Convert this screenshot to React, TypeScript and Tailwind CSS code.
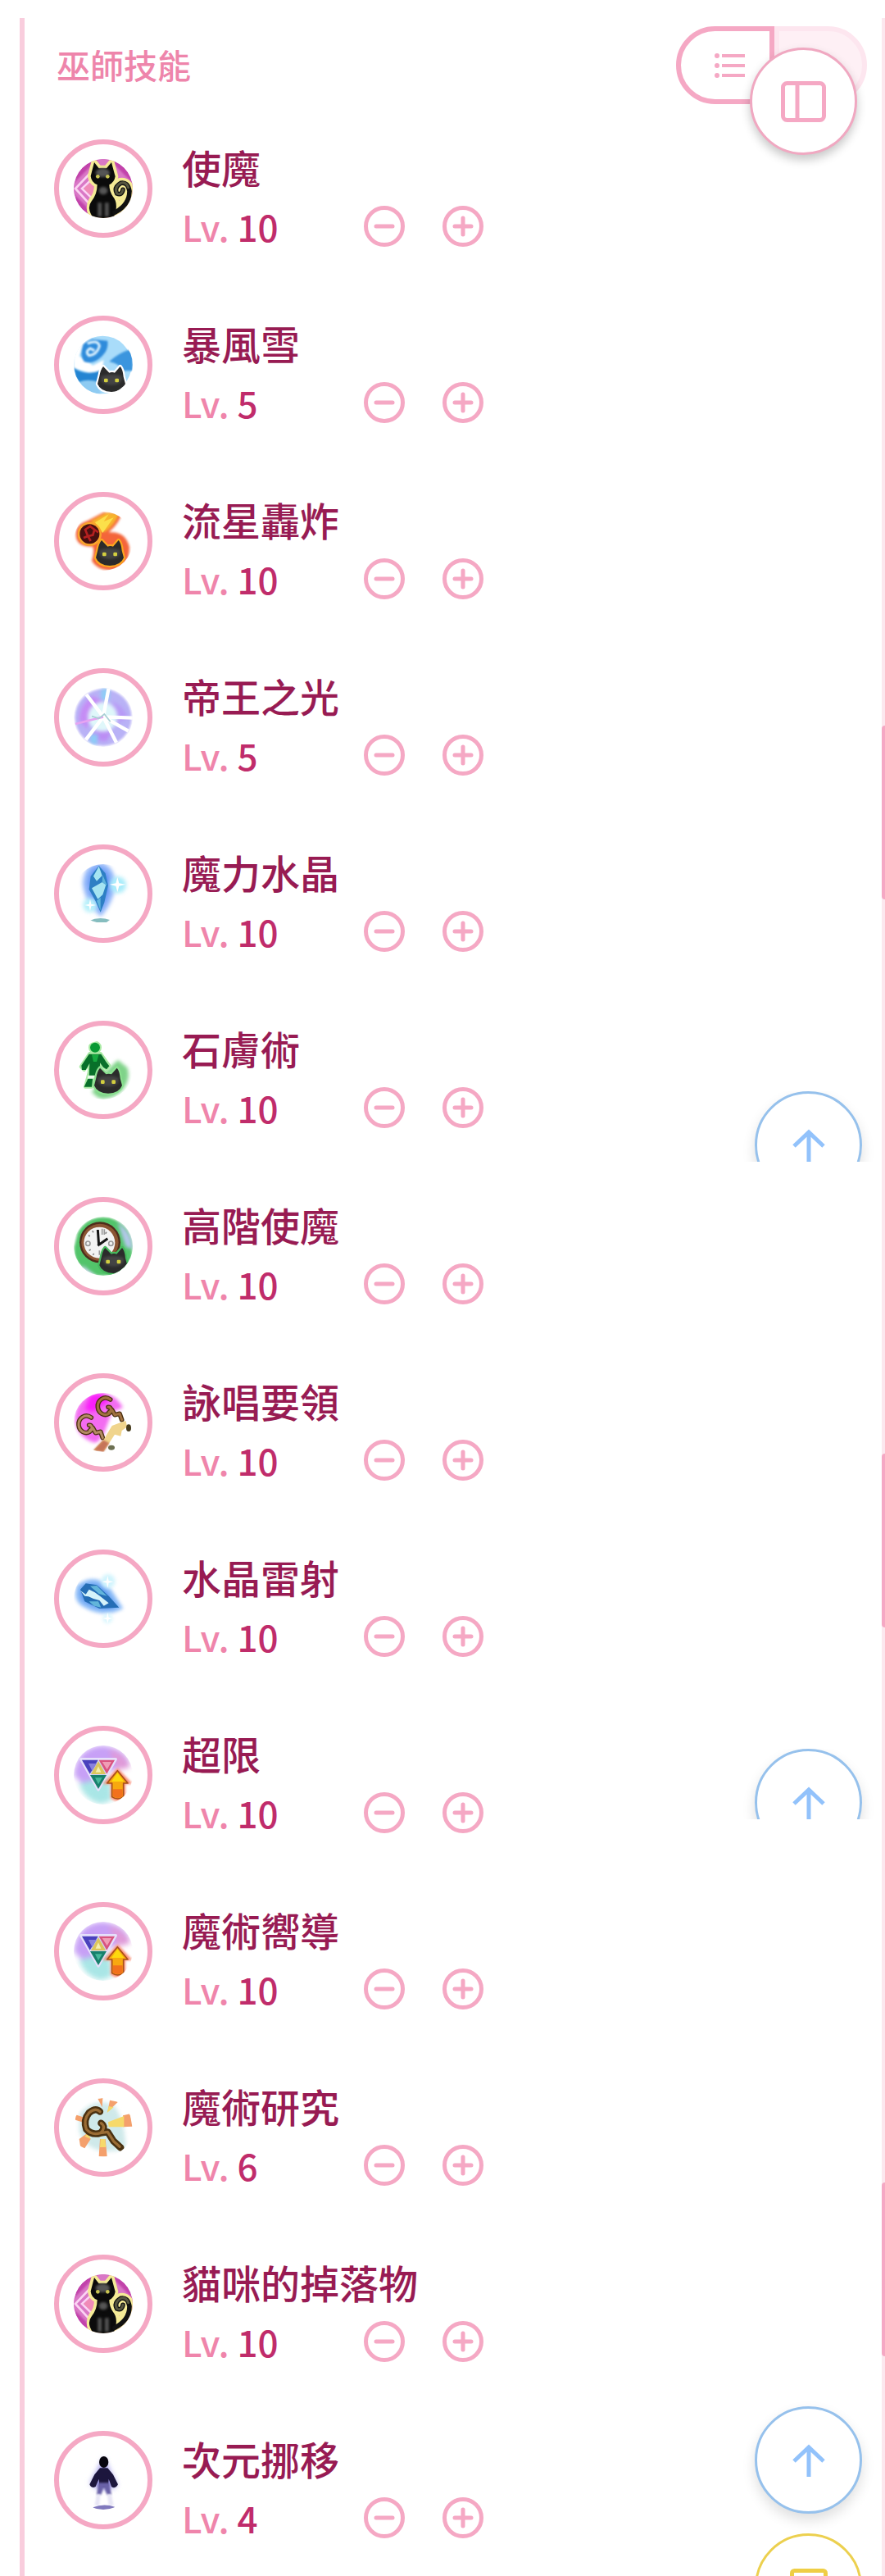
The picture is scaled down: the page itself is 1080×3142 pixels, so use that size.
import { useState } from 'react';
import type { ReactNode } from 'react';
import clsx from 'clsx';

type IconName =
  | 'familiar'
  | 'blizzard'
  | 'meteor'
  | 'light'
  | 'crystal'
  | 'stone'
  | 'clock'
  | 'chant'
  | 'laser'
  | 'prism'
  | 'research'
  | 'shift';

interface Skill {
  id: number;
  name: string;
  level: number;
  icon: IconName;
}

const SKILLS: Skill[] = [
  { id: 1, name: '使魔', level: 10, icon: 'familiar' },
  { id: 2, name: '暴風雪', level: 5, icon: 'blizzard' },
  { id: 3, name: '流星轟炸', level: 10, icon: 'meteor' },
  { id: 4, name: '帝王之光', level: 5, icon: 'light' },
  { id: 5, name: '魔力水晶', level: 10, icon: 'crystal' },
  { id: 6, name: '石膚術', level: 10, icon: 'stone' },
  { id: 7, name: '高階使魔', level: 10, icon: 'clock' },
  { id: 8, name: '詠唱要領', level: 10, icon: 'chant' },
  { id: 9, name: '水晶雷射', level: 10, icon: 'laser' },
  { id: 10, name: '超限', level: 10, icon: 'prism' },
  { id: 11, name: '魔術嚮導', level: 10, icon: 'prism' },
  { id: 12, name: '魔術研究', level: 6, icon: 'research' },
  { id: 13, name: '貓咪的掉落物', level: 10, icon: 'familiar' },
  { id: 14, name: '次元挪移', level: 4, icon: 'shift' },
];

const HEAD =
  'M108 114L130 137Q140 133 150 137L170 114Q180 125 182 152L189 178Q178 206 138 207Q98 206 87 178L94 150Q98 125 108 114Z';

const CatHead = ({ x = 0, y = 0, glow }: { x?: number; y?: number; glow: string }) => (
  <g transform={`translate(${x} ${y})`}>
    <path d={HEAD} fill={glow} stroke={glow} strokeWidth="13" strokeLinejoin="round" className="blur-[2px]" />
    <path d={HEAD} fill="#2b2b2b" />
    <path d="M100 150Q138 136 176 150Q182 180 138 182Q96 180 100 150Z" fill="#444" className="blur-[5px]" />
    <rect x="111" y="158" width="14" height="14" rx="4" fill="#d3cf3f" />
    <rect x="151" y="158" width="14" height="14" rx="4" fill="#d3cf3f" />
  </g>
);

const Staff = ({ x, y, color }: { x: number; y: number; color: string }) => (
  <g transform={`translate(${x} ${y})`} fill="none" strokeLinecap="round" strokeLinejoin="round">
    <path d="M52 10C30 -6 4 12 6 38C8 60 30 72 46 62C58 54 56 36 44 38M46 58L58 48L68 66L86 62L94 84" stroke="#4b3010" strokeWidth="17" />
    <path d="M52 10C30 -6 4 12 6 38C8 60 30 72 46 62C58 54 56 36 44 38M46 58L58 48L68 66L86 62L94 84" stroke={color} strokeWidth="9" />
  </g>
);

const ICONS: Record<IconName, ReactNode> = {
  familiar: (
    <>
      <circle cx="108" cy="108" r="108" fill="#c243ab" />
      <path d="M108 -20L236 108L108 236L-20 108Z" fill="#d978c6" className="blur-[3px]" />
      <path d="M90 20L6 108L90 200M90 52L30 108L90 166" fill="none" stroke="#fbd3f3" strokeWidth="8" />
      <path d="M76 70L36 108L76 148Z" fill="#f08bb8" />
      <g stroke="#f5eb96" strokeWidth="22" fill="#f5eb96" strokeLinejoin="round" className="blur-[2px]">
        <path d="M75 12L92 34H120L138 12L152 64Q148 86 130 94Q134 120 148 140L166 176L148 216H72Q48 180 66 150Q86 130 86 94Q64 84 62 62Z" />
        <path d="M150 196Q206 168 206 118Q200 82 170 86Q140 104 156 130Q180 140 182 112" strokeWidth="34" fill="#f5eb96" />
      </g>
      <path d="M75 12L92 34H120L138 12L152 64Q148 86 130 94Q130 118 144 138Q160 156 154 190L146 216H72Q46 180 64 156Q86 130 86 94Q64 84 62 62Z" fill="#0b0b0b" />
      <path d="M150 196Q204 168 204 118Q198 82 172 88Q146 104 158 126Q176 134 180 112" fill="none" stroke="#111" strokeWidth="17" strokeLinecap="round" />
      <path d="M200 104Q192 82 172 88Q146 104 158 126Q176 134 180 112" fill="none" stroke="#55553f" strokeWidth="9" strokeLinecap="round" />
      <g fill="#555" className="blur-[4px]">
        <ellipse cx="106" cy="50" rx="26" ry="16" />
        <ellipse cx="108" cy="116" rx="16" ry="14" />
        <path d="M88 160h14v50h-14zM114 160h14v50h-14z" />
      </g>
      <circle cx="88" cy="64" r="7" fill="#c9c552" />
      <circle cx="124" cy="64" r="7" fill="#c9c552" />
    </>
  ),
  blizzard: (
    <>
      <circle cx="106" cy="108" r="106" fill="#a9dcfa" />
      <g className="blur-[3px]">
        <path d="M0 0H70L40 30L20 76L70 110L110 90L100 150L0 120Z" fill="#fff" />
        <path d="M34 34Q20 76 38 96Q70 110 104 76Q128 52 124 20L70 14Q48 18 34 34Z" fill="#2f8bdb" />
        <path d="M50 30Q90 14 94 40Q84 72 56 74Q40 60 60 48L76 56" fill="none" stroke="#dff3ff" strokeWidth="9" />
        <path d="M210 50Q160 66 130 96Q170 104 180 130L216 130V60Z" fill="#3b95de" />
        <path d="M0 118Q40 150 100 128L96 204Q30 200 6 150Z" fill="#2384d2" />
        <path d="M20 170Q50 158 90 170L100 216H50Z" fill="#8ecbf2" />
      </g>
      <CatHead glow="#fff" />
    </>
  ),
  meteor: (
    <>
      <g className="blur-[5px]">
        <path d="M10 100Q-2 50 50 34L110 2L176 4Q170 40 128 76Q190 70 204 130Q204 200 150 214Q90 220 66 180Q76 150 70 128Q20 130 10 100Z" fill="#f4653a" />
        <path d="M60 36L120 4L166 8Q150 50 112 76Z" fill="#f7b52d" />
      </g>
      <path d="M78 40L128 10L110 36L146 22L106 78Z" fill="#fbe04a" className="blur-[2px]" />
      <circle cx="58" cy="82" r="44" fill="#f9a42d" className="blur-[2px]" />
      <circle cx="58" cy="82" r="36" fill="#471010" />
      <path d="M42 66L60 54L76 66L70 86L52 90ZM36 96L52 90L62 108M76 66L90 76" fill="none" stroke="#b52020" strokeWidth="8" className="blur-[1px]" />
      <CatHead x={-6} y={-9} glow="#fba51f" />
    </>
  ),
  light: (
    <>
      <circle cx="108" cy="108" r="104" fill="#b9b2f6" className="blur-[4px]" />
      <g className="blur-[6px]">
        <path d="M20 120Q20 60 70 30L110 50L60 90L50 150Z" fill="#c58cf5" />
        <path d="M140 50Q190 70 196 110L160 130Z" fill="#b79af6" />
        <path d="M70 160L140 160L120 196L70 190Z" fill="#bb8df4" />
        <path d="M100 4h30v40h-30zM60 170l30 0l-6 40l-24 -10z" fill="#8ccdf6" />
        <circle cx="106" cy="106" r="54" fill="#dff7fa" />
      </g>
      <g stroke="#fff" strokeWidth="13" className="blur-[2px]">
        <path d="M108 106L46 24M108 106L128 0M108 106L216 110M108 106L200 158M108 106L156 200M108 106L44 190" />
      </g>
      <path d="M108 106L6 132" stroke="#e6a4f2" strokeWidth="8" className="blur-[2px]" />
      <path d="M66 104L92 112L112 96L134 124" fill="none" stroke="#a8cfd4" strokeWidth="5" className="blur-[1px]" />
    </>
  ),
  crystal: (
    <>
      <path d="M90 4Q140 10 142 80Q130 140 98 176Q50 130 44 70Q50 10 90 4Z" fill="#5a8df0" stroke="#8fb5fa" strokeWidth="22" className="blur-[8px]" />
      <circle cx="162" cy="76" r="30" fill="#a9ecfa" className="blur-[8px]" />
      <circle cx="60" cy="150" r="26" fill="#b7f0fa" className="blur-[8px]" />
      <path d="M92 6L116 34L126 78L112 140L98 176L80 136L56 92L62 44Z" fill="#2d7fc4" />
      <path d="M92 8L104 42L84 62L72 44ZM66 88L104 66L118 76L106 112L88 128Z" fill="#a5e4f2" />
      <path d="M106 40L122 78L104 66ZM84 134L98 122L98 170Z" fill="#5fb4dc" />
      <path d="M160 48L166 70L190 74L166 80L160 102L154 80L132 74L154 70ZM60 128L64 146L82 150L64 154L60 172L56 154L40 150L56 146Z" fill="#fff" />
      <path d="M56 208Q92 190 132 204L120 213H66Z" fill="#86bdbf" className="blur-[2px]" />
    </>
  ),
  stone: (
    <>
      <path d="M162 72L196 100Q210 140 180 180Q140 222 90 210L66 190L120 110Z" fill="#7fd389" className="blur-[6px]" />
      <g stroke="#a9eaa4" strokeWidth="12" strokeLinejoin="round" fill="#a9eaa4" className="blur-[2px]">
        <circle cx="78" cy="26" r="18" />
        <path d="M58 48H98L130 92L120 106L96 84V118L66 170H42L56 118L58 84L38 108L26 96Z" />
      </g>
      <circle cx="78" cy="26" r="18" fill="#089a34" />
      <path d="M56 50H100L118 78L130 94L120 106L108 98L96 82V112L70 136L66 170H38L56 132L58 84L44 108H30L28 92Z" fill="#08702a" />
      <path d="M66 52H92L84 78H72Z" fill="#16ab40" />
      <path d="M52 128H78L72 140H50Z" fill="#e9fbe9" />
      <CatHead x={-12} y={-13} glow="#8ae08f" />
    </>
  ),
  clock: (
    <>
      <path d="M14 60Q50 -8 130 4Q214 30 214 120L210 216H90Q-4 190 2 110Z" fill="#52c46a" className="blur-[4px]" />
      <path d="M160 20Q220 60 214 120L190 110Z" fill="#b3c8ea" className="blur-[6px]" />
      <path d="M30 176L80 216L40 216Z" fill="#c5d2ee" className="blur-[6px]" />
      <circle cx="96" cy="94" r="75" fill="#4d2c1b" />
      <circle cx="96" cy="94" r="68" fill="#8b5533" />
      <circle cx="94" cy="95" r="57" fill="#f3f3f3" />
      <g fill="none" stroke="#9a9a9a" strokeWidth="5">
        <circle cx="52" cy="98" r="8" />
        <circle cx="136" cy="98" r="8" />
        <path d="M94 124v16M104 44v22M112 46v20" />
      </g>
      <path d="M54 68l5 4M68 52l4 6M120 56l-4 6M56 124l6-4M70 140l4-5" stroke="#888" strokeWidth="5" />
      <path d="M88 48L92 106M88 106L124 80" fill="none" stroke="#151515" strokeWidth="9" />
      <CatHead x={7} glow="#47b95e" />
    </>
  ),
  chant: (
    <>
      <circle cx="96" cy="92" r="92" fill="#f36cf1" className="blur-[6px]" />
      <path d="M60 10Q110 -10 130 30L70 70L40 60Z" fill="#fa1efa" className="blur-[8px]" />
      <path d="M140 70L216 40V216H60L110 150Z" fill="#fff" className="blur-[6px]" />
      <Staff x={82} y={14} color="#a0703f" />
      <Staff x={12} y={80} color="#b48a63" />
      <path d="M72 210L110 170L140 120L166 110L190 102L196 124L176 138L172 158L150 152L110 214Z" fill="#f0d48c" className="blur-[2px]" />
      <path d="M72 210L108 172L130 184L108 216Z" fill="#c67459" className="blur-[3px]" />
      <ellipse cx="201" cy="128" rx="9" ry="13" fill="#463b1c" />
      <ellipse cx="138" cy="200" rx="12" ry="9" fill="#6d7052" />
    </>
  ),
  laser: (
    <>
      <path d="M20 64Q80 20 130 80L168 140Q110 170 40 130Q4 110 20 64Z" fill="#5d99ee" stroke="#8cbcf8" strokeWidth="18" className="blur-[7px]" />
      <circle cx="126" cy="44" r="26" fill="#d1f4fd" className="blur-[6px]" />
      <circle cx="124" cy="180" r="18" fill="#d9f6fd" className="blur-[6px]" />
      <path d="M24 74L44 52L84 58L128 98L166 140L94 144L40 118Z" fill="#256eb6" />
      <path d="M24 78L44 92L56 74L76 84L96 98L128 124L110 134L94 114L72 108L54 100L40 98Z" fill="#d5f3fa" />
      <path d="M60 62L84 60L122 98L92 90ZM56 118L90 118L100 140L74 134Z" fill="#62b5da" />
      <path d="M124 24L128 42L146 46L128 50L124 68L120 50L104 46L120 42ZM124 160L128 176L142 180L128 184L124 198L120 184L106 180L120 176Z" fill="#fff" />
    </>
  ),
  prism: (
    <>
      <g className="blur-[9px]">
        <path d="M0 108Q10 10 100 0Q190 6 206 70L120 100L40 150Z" fill="#c7a0f6" />
        <path d="M130 16Q190 30 206 80L160 90Z" fill="#e09ad8" />
        <path d="M20 140L130 110L140 200L100 214Q40 200 20 140Z" fill="#a9e6e6" />
      </g>
      <path d="M26 50H154L90 162Z" fill="#cfd0f0" stroke="#e6e0fb" strokeWidth="10" strokeLinejoin="round" className="blur-[1px]" />
      <path d="M30 53H89L59 104Z" fill="#4a41bd" />
      <path d="M54 66H84L68 94Z" fill="#8a82dc" />
      <path d="M92 53H150L121 104Z" fill="#d9537f" />
      <path d="M104 60H138L122 88Z" fill="#ef9db5" />
      <path d="M90 58L117 105H63Z" fill="#dcc65c" />
      <path d="M90 76L100 98H80Z" fill="#f5efae" />
      <path d="M60 108H120L90 159Z" fill="#17806c" />
      <path d="M78 118H104L90 142Z" fill="#46b89b" />
      <path d="M160 90L204 136H184V190Q160 206 140 190V136H118Z" fill="#fa7257" stroke="#fa8a72" strokeWidth="10" className="blur-[5px]" />
      <path d="M160 92L198 138H182V188Q160 202 140 188V138H122Z" fill="#f8a810" stroke="#a8501a" strokeWidth="5" strokeLinejoin="round" />
      <path d="M160 100L184 132H138Z" fill="#fdd90e" />
      <path d="M143 160H179V186Q160 198 143 186Z" fill="#f2711c" className="blur-[2px]" />
    </>
  ),
  research: (
    <>
      <path d="M20 60Q80 -10 150 30Q190 90 190 190L120 196Q40 190 20 120Z" fill="#cfe9ea" className="blur-[8px]" />
      <g fill="#f4a06c" className="blur-[1px]">
        <path d="M88 2L106 0L104 34ZM132 8L162 14L124 50ZM4 60L34 70L30 88L6 80ZM20 150L50 128L62 150L40 184L24 176ZM96 150H116L122 214H92ZM180 64L206 58L214 104L180 106Z" />
      </g>
      <path d="M126 88L184 66V106L128 106ZM98 150H114L118 180H96ZM128 30L146 34L122 54ZM40 140L52 128L62 150Z" fill="#f6d96a" />
      <g fill="none" strokeLinecap="round" strokeLinejoin="round">
        <path d="M96 50Q80 34 56 54Q34 80 46 114Q66 138 98 128Q120 106 100 92M98 128L124 124L146 158L172 182" stroke="#4a3111" strokeWidth="25" />
        <path d="M96 50Q80 34 56 54Q34 80 46 114Q66 138 98 128Q120 106 100 92M98 128L124 124L146 158L168 178" stroke="#9a6c35" strokeWidth="10" />
      </g>
    </>
  ),
  shift: (
    <>
      <path d="M110 24L134 76L160 128L136 140L84 140L60 120L84 76Z" fill="#a5a0ea" className="blur-[9px]" />
      <g className="blur-[2px]">
        <ellipse cx="110" cy="42" rx="17" ry="21" fill="#08060f" />
        <path d="M96 64H124L144 88L162 124Q152 142 138 132L128 104L126 134H94L92 104L80 132Q64 140 58 124L76 88Z" fill="#1c163d" />
      </g>
      <path d="M90 118H130L138 162H122L110 134L100 162H84Z" fill="#6a62a8" className="blur-[3px]" />
      <path d="M84 160H98L94 202H76ZM122 160H138L146 202H128Z" fill="#e8e6f5" className="blur-[3px]" />
      <path d="M70 208Q110 192 150 206L144 218H86Z" fill="#8079bd" className="blur-[1px]" />
    </>
  ),
};

const SkillIcon = ({ name }: { name: IconName }) => (
  <div className="flex size-[120px] shrink-0 items-center justify-center rounded-full border-6 border-[#f5a8c4]">
    <svg viewBox="0 0 216 216" className="size-[72px] overflow-hidden rounded-full" aria-hidden="true">
      {ICONS[name]}
    </svg>
  </div>
);

interface StepButtonProps {
  label: string;
  plus?: boolean;
  onClick: () => void;
}

const StepButton = ({ label, plus, onClick }: StepButtonProps) => (
  <button type="button" aria-label={label} onClick={onClick} className="text-[#f5a8c4]">
    <svg viewBox="0 0 50 50" className="size-[50px]" fill="none" stroke="currentColor" strokeWidth="5" strokeLinecap="round">
      <circle cx="25" cy="25" r="22.5" />
      <path d={plus ? 'M15 25H35M25 15V35' : 'M15 25H35'} />
    </svg>
  </button>
);

const SkillRow = ({ skill, onStep }: { skill: Skill; onStep: (id: number, by: number) => void }) => (
  <li className="flex items-start gap-9">
    <SkillIcon name={skill.icon} />
    <div>
      <h3 className="text-[48px] leading-[66px] font-medium text-[#981b53]">{skill.name}</h3>
      <div className="flex h-20 items-center">
        <p className="w-[222px] text-[44px] leading-[76px] font-medium text-[#ef85ab]">
          Lv. <span className="text-[#c02c6b]">{skill.level}</span>
        </p>
        <div className="flex gap-[46px]">
          <StepButton label={`${skill.name} －`} onClick={() => onStep(skill.id, -1)} />
          <StepButton label={`${skill.name} ＋`} plus onClick={() => onStep(skill.id, 1)} />
        </div>
      </div>
    </div>
  </li>
);

const ViewToggle = () => {
  const [view, setView] = useState<'list' | 'grid'>('list');

  return (
    <div className="flex h-[95px]">
      <button
        type="button"
        aria-label="清單"
        onClick={() => setView('list')}
        className={clsx(
          'flex w-[120px] items-center justify-center rounded-l-full border-6 pl-3',
          view === 'list' ? 'border-[#f5a8c4] bg-white' : 'border-[#fde6ef] bg-[#fef0f5]'
        )}
      >
        <svg viewBox="0 0 38 30" className="h-[30px] w-[38px]" fill="#f5a8c4" aria-hidden="true">
          <circle cx="3" cy="3" r="3" />
          <circle cx="3" cy="15" r="3" />
          <circle cx="3" cy="27" r="3" />
          <path d="M9 1H37V5H9ZM9 13H37V17H9ZM9 25H37V29H9Z" />
        </svg>
      </button>
      <button
        type="button"
        aria-label="格狀"
        onClick={() => setView('grid')}
        className={clsx(
          'w-[113px] rounded-r-full border-6',
          view === 'grid' ? 'border-[#f5a8c4] bg-white' : 'border-[#fde6ef] bg-[#fef0f5]'
        )}
      />
    </div>
  );
};

const UpButton = () => (
  <button
    type="button"
    aria-label="回到頂端"
    className="flex size-[131px] items-center justify-center rounded-full border-3 border-[#96c1ec] bg-white shadow-[0_8px_16px_rgba(0,0,0,0.13)]"
  >
    <svg viewBox="0 0 40 40" className="size-10" fill="none" stroke="#92c2fb" strokeWidth="5" aria-hidden="true">
      <path d="M20 40V4M2 21L20 4L38 21" />
    </svg>
  </button>
);

export default function App() {
  const [skills, setSkills] = useState(SKILLS);

  const handleStep = (id: number, by: number) => {
    setSkills(prev => prev.map(s => (s.id === id ? { ...s, level: Math.max(0, s.level + by) } : s)));
  };

  return (
    <div className="relative overflow-hidden bg-white pt-[22px] font-['Noto_Sans_CJK_TC',sans-serif]">
      <main className="ml-6 border-r-4 border-l-6 border-r-[#fce7ee] border-l-[#f9cddd] pr-[18px] pb-[31px] pl-9">
        <header className="flex h-[148px] items-start justify-between pt-[10px]">
          <h2 className="pl-[3px] text-[41px] leading-[92px] font-medium text-[#ee85ab]">巫師技能</h2>
          <ViewToggle />
        </header>
        <ul className="flex flex-col gap-[69px]">
          {skills.map(skill => (
            <SkillRow key={skill.id} skill={skill} onStep={handleStep} />
          ))}
        </ul>
      </main>

      {/* scroll thumbs */}
      <div className="absolute top-[885px] right-0 h-[212px] w-1 rounded-l-sm bg-[#f5a8c4]" />
      <div className="absolute top-[1773px] right-0 h-[212px] w-1 rounded-l-sm bg-[#f5a8c4]" />
      <div className="absolute top-[2662px] right-0 h-[212px] w-1 rounded-l-sm bg-[#f5a8c4]" />

      {/* floating buttons */}
      <button
        type="button"
        aria-label="側邊欄"
        className="absolute top-[58px] right-[34px] flex size-[131px] items-center justify-center rounded-full border-3 border-[#f0a8c1] bg-white shadow-[0_6px_12px_rgba(0,0,0,0.22)]"
      >
        <svg viewBox="0 0 55 50" className="h-[50px] w-[55px]" fill="none" stroke="#f5a8c4" strokeWidth="5" aria-hidden="true">
          <rect x="2.5" y="2.5" width="50" height="45" rx="5" />
          <path d="M20 2V48" />
        </svg>
      </button>
      <div className="absolute top-[1331px] right-2 h-[86px] overflow-hidden px-5">
        <UpButton />
      </div>
      <div className="absolute top-[2133px] right-2 h-[86px] overflow-hidden px-5">
        <UpButton />
      </div>
      <div className="absolute top-[2935px] right-7 flex flex-col gap-6">
        <UpButton />
        <button
          type="button"
          aria-label="筆記"
          className="flex size-[131px] items-center justify-center rounded-full border-3 border-[#ecd04f] bg-white"
        >
          <svg viewBox="0 0 46 46" className="size-[46px]" fill="none" stroke="#efce45" strokeWidth="5" aria-hidden="true">
            <rect x="2.5" y="2.5" width="41" height="41" rx="3" />
            <path d="M12 16H34M12 26H34" />
          </svg>
        </button>
      </div>
    </div>
  );
}
